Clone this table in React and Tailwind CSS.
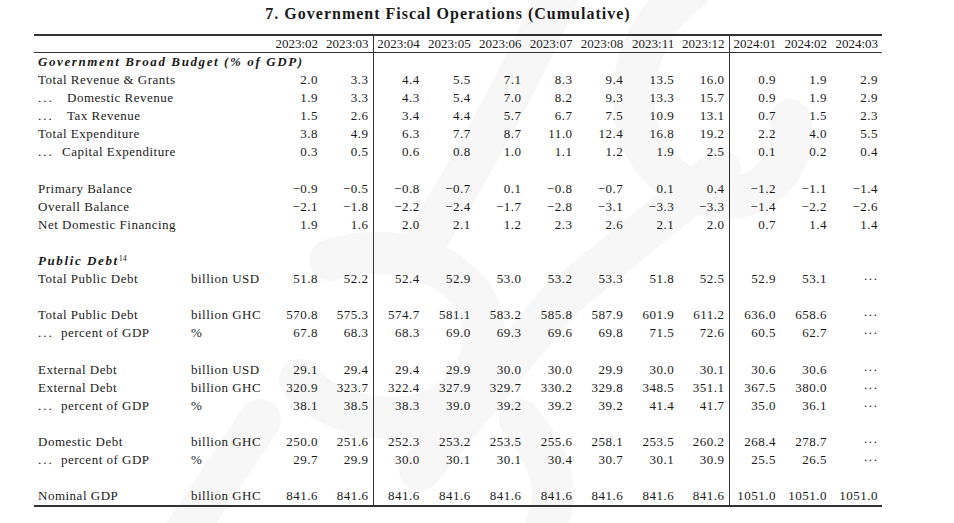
import React from "react";

const M = "\u2212";
const D = "\u00b7\u00b7\u00b7";

const headers = ["2023:02", "2023:03", "2023:04", "2023:05", "2023:06", "2023:07", "2023:08", "2023:11", "2023:12", "2024:01", "2024:02", "2024:03"];

const rows = [
  { section: "Government Broad Budget (% of GDP)" },
  { label: "Total Revenue & Grants", vals: ["2.0", "3.3", "4.4", "5.5", "7.1", "8.3", "9.4", "13.5", "16.0", "0.9", "1.9", "2.9"] },
  { label: "Domestic Revenue", dots: "w-[29px]", vals: ["1.9", "3.3", "4.3", "5.4", "7.0", "8.2", "9.3", "13.3", "15.7", "0.9", "1.9", "2.9"] },
  { label: "Tax Revenue", dots: "w-[29px]", vals: ["1.5", "2.6", "3.4", "4.4", "5.7", "6.7", "7.5", "10.9", "13.1", "0.7", "1.5", "2.3"] },
  { label: "Total Expenditure", vals: ["3.8", "4.9", "6.3", "7.7", "8.7", "11.0", "12.4", "16.8", "19.2", "2.2", "4.0", "5.5"] },
  { label: "Capital Expenditure", dots: "w-[24px]", vals: ["0.3", "0.5", "0.6", "0.8", "1.0", "1.1", "1.2", "1.9", "2.5", "0.1", "0.2", "0.4"] },
  { blank: true },
  { label: "Primary Balance", vals: [M + "0.9", M + "0.5", M + "0.8", M + "0.7", "0.1", M + "0.8", M + "0.7", "0.1", "0.4", M + "1.2", M + "1.1", M + "1.4"] },
  { label: "Overall Balance", vals: [M + "2.1", M + "1.8", M + "2.2", M + "2.4", M + "1.7", M + "2.8", M + "3.1", M + "3.3", M + "3.3", M + "1.4", M + "2.2", M + "2.6"] },
  { label: "Net Domestic Financing", vals: ["1.9", "1.6", "2.0", "2.1", "1.2", "2.3", "2.6", "2.1", "2.0", "0.7", "1.4", "1.4"] },
  { blank: true },
  { section: "Public Debt", sup: "14" },
  { label: "Total Public Debt", unit: "billion USD", vals: ["51.8", "52.2", "52.4", "52.9", "53.0", "53.2", "53.3", "51.8", "52.5", "52.9", "53.1", D] },
  { blank: true },
  { label: "Total Public Debt", unit: "billion GHC", vals: ["570.8", "575.3", "574.7", "581.1", "583.2", "585.8", "587.9", "601.9", "611.2", "636.0", "658.6", D] },
  { label: "percent of GDP", dots: "w-[23px]", unit: "%", vals: ["67.8", "68.3", "68.3", "69.0", "69.3", "69.6", "69.8", "71.5", "72.6", "60.5", "62.7", D] },
  { blank: true },
  { label: "External Debt", unit: "billion USD", vals: ["29.1", "29.4", "29.4", "29.9", "30.0", "30.0", "29.9", "30.0", "30.1", "30.6", "30.6", D] },
  { label: "External Debt", unit: "billion GHC", vals: ["320.9", "323.7", "322.4", "327.9", "329.7", "330.2", "329.8", "348.5", "351.1", "367.5", "380.0", D] },
  { label: "percent of GDP", dots: "w-[23px]", unit: "%", vals: ["38.1", "38.5", "38.3", "39.0", "39.2", "39.2", "39.2", "41.4", "41.7", "35.0", "36.1", D] },
  { blank: true },
  { label: "Domestic Debt", unit: "billion GHC", vals: ["250.0", "251.6", "252.3", "253.2", "253.5", "255.6", "258.1", "253.5", "260.2", "268.4", "278.7", D] },
  { label: "percent of GDP", dots: "w-[23px]", unit: "%", vals: ["29.7", "29.9", "30.0", "30.1", "30.1", "30.4", "30.7", "30.1", "30.9", "25.5", "26.5", D] },
  { blank: true },
  { label: "Nominal GDP", unit: "billion GHC", vals: ["841.6", "841.6", "841.6", "841.6", "841.6", "841.6", "841.6", "841.6", "841.6", "1051.0", "1051.0", "1051.0"] },
];

// vertical rules sit after 2023:03 and 2023:12
const ruleAfter = (i) => (i === 1 || i === 8 ? "border-r border-[#333]" : "");

function Watermark() {
  return (
    <svg className="absolute left-0 top-0 pointer-events-none" width="954" height="523" viewBox="0 0 954 523">
      <g fill="none" stroke="#f7f7f7" strokeWidth="42" strokeLinecap="round">
        <path d="M560 -10 C 520 80, 470 170, 420 250" />
        <path d="M690 -10 C 620 40, 610 150, 690 190 C 760 220, 800 160, 790 120" />
        <path d="M720 170 L 560 300 L 420 470" />
        <path d="M330 260 C 430 230, 520 300, 470 380 C 430 440, 330 420, 300 380" />
        <path d="M180 540 L 260 420" />
        <path d="M520 420 C 560 470, 560 500, 540 540" />
      </g>
    </svg>
  );
}

export default function App() {
  return (
    <div className="relative w-[954px] h-[523px] bg-white overflow-hidden text-[#1a1a1a] font-['Liberation_Serif',serif]">
      <Watermark />
      <div className="relative pl-[34px] pt-[3px]">
        <div className="w-[848px] pr-[20px] text-center text-[16px] leading-[22px] font-bold tracking-[1px]">
          7. Government Fiscal Operations (Cumulative)
        </div>
        <table className="mt-[9px] table-fixed border-collapse text-[13px] tracking-[0.5px]">
          <colgroup>
            <col className="w-[153px]" />
            <col className="w-[84px]" />
            <col className="w-[51px]" />
            <col className="w-[51px]" />
            {[0, 1, 2, 3, 4, 5, 6].map((i) => (
              <col key={i} className="w-[50.86px]" />
            ))}
            <col className="w-[51px]" />
            <col className="w-[51px]" />
            <col className="w-[51px]" />
          </colgroup>
          <thead>
            <tr className="h-[17px] border-t-2 border-b border-[#333]">
              <th />
              <th />
              {headers.map((h, i) => (
                <th key={h} className={`pr-[4px] text-right font-normal tracking-normal leading-[16px] ${ruleAfter(i)}`}>
                  {h}
                </th>
              ))}
            </tr>
          </thead>
          <tbody>
            {rows.map((r, ri) => {
              const last = ri === rows.length - 1;
              const rowCls = `h-[18.1px] leading-[18px] ${last ? "border-b-2 border-[#333]" : ""}`;
              if (r.section) {
                return (
                  <tr key={ri} className={rowCls}>
                    <td colSpan={3} className="pl-[4px] whitespace-nowrap font-bold italic tracking-[1.6px]">
                      {r.section}
                      {r.sup && <sup className="text-[8px] font-normal not-italic tracking-normal">{r.sup}</sup>}
                    </td>
                    {headers.slice(1).map((h, i) => (
                      <td key={h} className={ruleAfter(i + 1)} />
                    ))}
                  </tr>
                );
              }
              return (
                <tr key={ri} className={rowCls}>
                  <td className="pl-[4px] whitespace-nowrap">
                    {r.dots && <span className={`inline-block ${r.dots} tracking-[2px]`}>...</span>}
                    {r.label}
                  </td>
                  <td className="pl-[4px] whitespace-nowrap">{r.unit}</td>
                  {headers.map((h, i) => (
                    <td key={h} className={`pr-[4px] text-right whitespace-nowrap ${ruleAfter(i)}`}>
                      {r.vals ? r.vals[i] : ""}
                    </td>
                  ))}
                </tr>
              );
            })}
          </tbody>
        </table>
      </div>
    </div>
  );
}
